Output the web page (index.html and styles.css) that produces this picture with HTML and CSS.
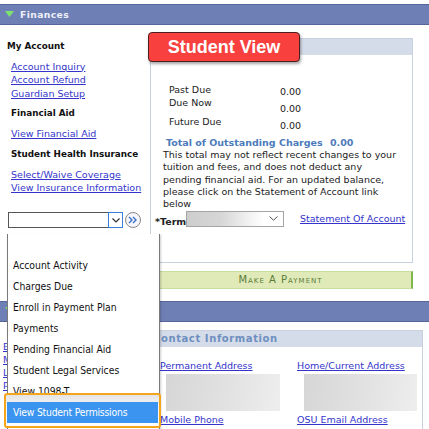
FILE: index.html
```html
<!DOCTYPE html>
<html>
<head>
<meta charset="utf-8">
<link rel="stylesheet" href="styles.css">
</head>
<body>
<div class="bar"><svg class="tri" width="9" height="6" viewBox="0 0 9 6"><path d="M0 0H9L4.5 6Z" fill="#7ee06e"/></svg><span class="bar-title">Finances</span></div>
<div class="section s1">
  <div class="left">
    <div class="group">
      <div class="head first">My Account</div>
      <a class="link" href="#">Account Inquiry</a>
      <a class="link" href="#">Account Refund</a>
      <a class="link" href="#">Guardian Setup</a>
    </div>
    <div class="group">
      <div class="head">Financial Aid</div>
      <a class="link" href="#">View Financial Aid</a>
    </div>
    <div class="group">
      <div class="head">Student Health Insurance</div>
      <a class="link" href="#">Select/Waive Coverage</a>
      <a class="link" href="#">View Insurance Information</a>
    </div>
    <div class="combo">
      <div class="combo-box"><div class="combo-arrow"><svg width="8" height="5" viewBox="0 0 8 5"><path d="M0.5 0.5L4 4L7.5 0.5" fill="none" stroke="#333" stroke-width="1.2"/></svg></div></div>
      <div class="go"><svg width="10" height="8" viewBox="0 0 10 8"><path d="M1 1L4 4L1 7M5 1L8 4L5 7" fill="none" stroke="#3a6fc8" stroke-width="1.4"/></svg></div>
    </div>
  </div>
  <div class="right">
    <div class="panel acct">
      <div class="panel-head"></div>
      <div class="acct-body">
        <div class="dues">
          <div class="labels">
            <div class="lab">Past Due</div>
            <div class="lab">Due Now</div>
            <div class="lab future">Future Due</div>
          </div>
          <div class="values">
            <div class="val">0.00</div>
            <div class="val">0.00</div>
            <div class="val">0.00</div>
          </div>
        </div>
        <div class="total"><span class="total-label">Total of Outstanding Charges</span><span class="total-val">0.00</span></div>
        <p class="note">This total may not reflect recent changes to your<br>tuition and fees, and does not deduct any<br>pending financial aid. For an updated balance,<br>please click on the Statement of Account link<br>below</p>
        <div class="term">
          <span class="term-label">*Term</span>
          <div class="term-select"><svg width="9" height="5" viewBox="0 0 9 5"><path d="M0.5 0.5L4.5 4.2L8.5 0.5" fill="none" stroke="#555" stroke-width="1"/></svg></div>
          <a class="link stmt" href="#">Statement Of Account</a>
        </div>
      </div>
    </div>
    <div class="pay">Make A Payment</div>
  </div>
</div>
<div class="bar"><svg class="tri" width="9" height="6" viewBox="0 0 9 6"><path d="M0 0H9L4.5 6Z" fill="#7ee06e"/></svg></div>
<div class="section s2">
  <div class="left left2">
    <a class="link" href="#">E</a>
    <a class="link" href="#">M</a>
    <a class="link" href="#">L</a>
    <a class="link" href="#">P</a>
  </div>
  <div class="right">
    <div class="panel contact">
      <div class="panel-head"><span class="contact-title">Contact Information</span></div>
      <div class="contact-body">
        <div class="ccol">
          <a class="link" href="#">Permanent Address</a>
          <div class="blur b1"></div>
          <a class="link" href="#">Mobile Phone</a>
        </div>
        <div class="ccol">
          <a class="link" href="#">Home/Current Address</a>
          <div class="blur b2"></div>
          <a class="link" href="#">OSU Email Address</a>
        </div>
      </div>
    </div>
  </div>
</div>

<div class="student-view">Student View</div>

<div class="menu">
  <div class="item"></div>
  <div class="item">Account Activity</div>
  <div class="item">Charges Due</div>
  <div class="item">Enroll in Payment Plan</div>
  <div class="item">Payments</div>
  <div class="item">Pending Financial Aid</div>
  <div class="item">Student Legal Services</div>
  <div class="item">View 1098-T</div>
</div>
<div class="frame">
  <div class="item selected">View Student Permissions</div>
</div>
</body>
</html>
```

FILE: styles.css
```css
* { box-sizing: border-box; }
html, body { margin: 0; }
body {
  padding-top: 4px;
  width: 429px;
  height: 429px;
  overflow: hidden;
  position: relative;
  background: #fff;
  font-family: "DejaVu Sans", Verdana, sans-serif;
  font-size: 9.5px;
  color: #222;
}
.bar {
  height: 21px;
  background: #6e7fb5;
  border-top: 1px solid #56659a;
  border-bottom: 1px solid #56659a;
  display: flex;
  align-items: center;
  padding-left: 5px;
  gap: 6px;
}
.tri { flex: none; margin-top: -2px; }
.bar-title {
  color: #eef0f8;
  font-weight: bold;
  font-size: 9.2px;
  letter-spacing: 0.4px;
}
.section { display: flex; }
.left { width: 150px; flex: none; padding-left: 11px; }
.s1 .left { padding-top: 14.5px; }
.s1 .right { padding-top: 13px; padding-bottom: 12px; width: 263px; flex: none; }
.group { margin-bottom: 7px; }
.head { font-weight: bold; font-size: 8.8px; line-height: 13px; color: #111; margin-bottom: 7px; white-space: nowrap; }
.head.first { margin-left: -4px; }
.link { display: block; line-height: 13.5px; color: #3434cc; text-decoration: underline; white-space: nowrap; }

.combo { display: flex; align-items: center; margin-left: -3px; margin-top: 17.5px; gap: 2px; }
.combo-box {
  width: 115px; height: 16px;
  border: 1px solid #555;
  border-right: none;
  display: flex; justify-content: flex-end;
}
.combo-arrow {
  width: 15px; height: 16px; margin-top: -1px;
  border: 1px solid #3a7fd8;
  display: flex; align-items: center; justify-content: center;
  background: #fff;
}
.go {
  width: 16px; height: 16px; border-radius: 50%;
  border: 1px solid #888;
  display: flex; align-items: center; justify-content: center;
  background: #f4f6fa;
}

.panel { border: 1px solid #c9d1e0; background: #fff; }
.panel-head { height: 16px; background: #d5dce9; display: flex; align-items: center; }
.acct-body { padding: 27.5px 0 35px 0; }
.dues { display: flex; padding-left: 18px; }
.labels { width: 111px; }
.lab { line-height: 13px; }
.lab.future { margin-top: 6px; }
.val { line-height: 17px; }
.total { margin-top: 3.5px; padding-left: 15px; line-height: 12px; display: flex; font-weight: bold; color: #4b7bbb; }
.total-label { width: 164px; }
.note { margin: 0; padding-left: 12px; line-height: 12.3px; white-space: nowrap; }
.term { display: flex; align-items: flex-start; padding-left: 4px; margin-top: 0.5px; height: 16px; }
.term-label { font-weight: bold; width: 31px; line-height: 12px; margin-top: 5px; color: #222; }
.term-select {
  width: 98px; height: 16px;
  border: 1px solid #a5a5a5;
  background: linear-gradient(90deg, #cdcdcd 0%, #d6d6d6 35%, #f2f2f2 65%, #fff 80%);
  display: flex; align-items: center; justify-content: flex-end; padding-right: 5px;
}
.stmt { margin-left: 16px; margin-top: 1.5px; }

.pay {
  margin-top: 8px; height: 18px;
  background: #dfeab8;
  border-top: 1px solid #c8dca0;
  border-bottom: 1px solid #c8dca0;
  border-right: 2px solid #7fb94e;
  color: #5c7a38;
  font-variant: small-caps;
  font-size: 10px;
  letter-spacing: 1px;
  display: flex; align-items: center; justify-content: center;
}

.left2 { padding-left: 3px; padding-top: 18px; }
.left2 .link { line-height: 13px; }
.s2 .right { padding-top: 8px; width: 273px; flex: none; }
.contact-title { color: #6d8fc0; font-weight: bold; font-size: 10px; letter-spacing: 0.6px; padding-left: 2px; }
.contact-body { display: flex; padding: 12.5px 0 20px 9px; }
.ccol { width: 137px; flex: none; }
.ccol .link { line-height: 13px; }
.blur { height: 37px; margin: 1.5px 0 2.5px; background: linear-gradient(100deg, #d6d6d6, #e2e2e2 55%, #eeeeee); }
.b1 { margin-left: 6px; width: 114px; }
.b2 { margin-left: 7px; width: 113px; }

.student-view {
  position: absolute; left: 148px; top: 32px;
  width: 152px; height: 30px;
  background: #f8403f;
  border: 1px solid #4a2020;
  border-radius: 4px;
  box-shadow: 1px 2px 3px rgba(0,0,0,0.35);
  color: #fff;
  font-family: "Liberation Sans", Arial, sans-serif;
  font-weight: bold;
  font-size: 18px;
  display: flex; align-items: center; justify-content: center;
}

.menu {
  position: absolute; left: 7px; top: 234px;
  width: 153px; height: 200px;
  background: #fff;
  border: 1px solid #7a7a7a;
  border-top: none;
  box-shadow: 1px 1px 2px rgba(0,0,0,0.2);
}
.item {
  height: 21px; line-height: 21px; padding-left: 5px;
  font-family: "DejaVu Sans Condensed", "DejaVu Sans", sans-serif;
  font-stretch: condensed;
  font-size: 10.3px;
  color: #111;
  white-space: nowrap;
}
.frame {
  position: absolute; left: 4px; top: 393px;
  width: 157px; height: 35px;
  border: 2px solid #f5a51c;
  border-radius: 3px;
  background: linear-gradient(#e4e4e4, #f6f6f6 40%, #fff);
  padding: 7px 1px 0 1px;
}
.item.selected { background: #3b95f0; color: #fff; padding-left: 6px; letter-spacing: -0.2px; }
```
